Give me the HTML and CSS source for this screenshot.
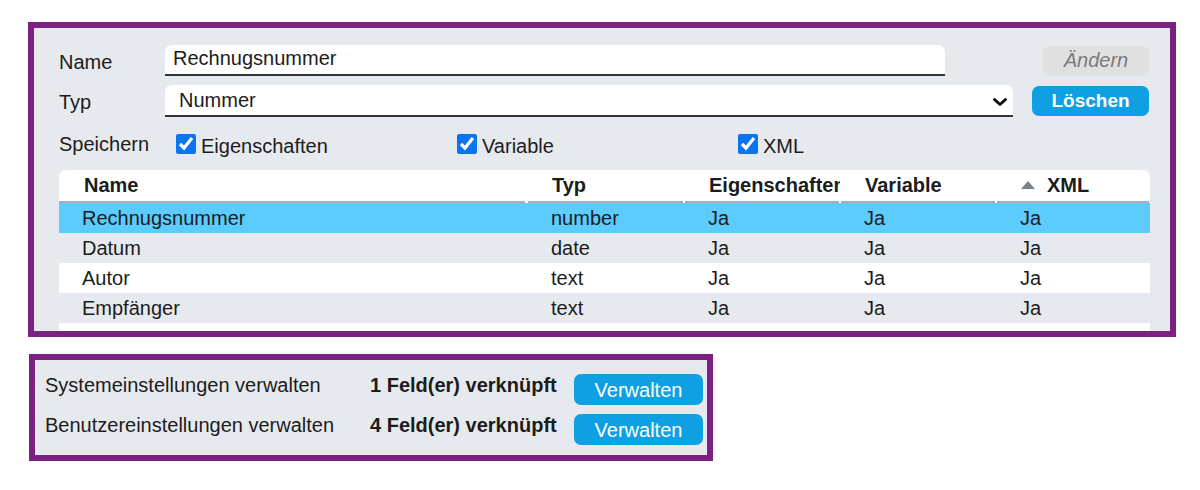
FILE: index.html
```html
<!DOCTYPE html>
<html lang="de">
<head>
<meta charset="utf-8">
<title>Felder</title>
<link rel="stylesheet" href="styles.css">
</head>
<body>
<section class="panel panel-main">
  <div class="form-row row-name">
    <label class="lbl" for="fname">Name</label>
    <input id="fname" class="txt" type="text" value="Rechnugsnummer">
    <button class="btn btn-disabled" type="button">Ändern</button>
  </div>
  <div class="form-row row-type">
    <label class="lbl" for="ftype">Typ</label>
    <div class="select-wrap">
      <select id="ftype" class="sel">
        <option>Nummer</option>
      </select>
      <svg class="chev" width="16" height="10" viewBox="0 0 16 10" aria-hidden="true"><path d="M2.5 2.5 L8 7.5 L13.5 2.5" fill="none" stroke="#111" stroke-width="3" stroke-linecap="round" stroke-linejoin="round"/></svg>
    </div>
    <button class="btn btn-primary btn-delete" type="button">Löschen</button>
  </div>
  <div class="form-row row-save">
    <span class="lbl">Speichern</span>
    <div class="checks">
      <label class="chk"><input type="checkbox" checked><span>Eigenschaften</span></label>
      <label class="chk"><input type="checkbox" checked><span>Variable</span></label>
      <label class="chk"><input type="checkbox" checked><span>XML</span></label>
    </div>
  </div>
  <div class="table">
    <div class="tr thead">
      <div class="th">Name</div>
      <div class="th">Typ</div>
      <div class="th">Eigenschaften</div>
      <div class="th">Variable</div>
      <div class="th th-sort"><span class="tri"></span>XML</div>
    </div>
    <div class="tr selected"><div class="td">Rechnugsnummer</div><div class="td">number</div><div class="td">Ja</div><div class="td">Ja</div><div class="td">Ja</div></div>
    <div class="tr alt"><div class="td">Datum</div><div class="td">date</div><div class="td">Ja</div><div class="td">Ja</div><div class="td">Ja</div></div>
    <div class="tr"><div class="td">Autor</div><div class="td">text</div><div class="td">Ja</div><div class="td">Ja</div><div class="td">Ja</div></div>
    <div class="tr alt"><div class="td">Empfänger</div><div class="td">text</div><div class="td">Ja</div><div class="td">Ja</div><div class="td">Ja</div></div>
    <div class="tr"><div class="td"></div><div class="td"></div><div class="td"></div><div class="td"></div><div class="td"></div></div>
  </div>
</section>

<section class="panel panel-settings">
  <div class="set-grid">
    <span class="set-label">Systemeinstellungen verwalten</span>
    <strong class="set-count">1 Feld(er) verknüpft</strong>
    <button class="btn btn-primary btn-manage" type="button">Verwalten</button>
    <span class="set-label">Benutzereinstellungen verwalten</span>
    <strong class="set-count">4 Feld(er) verknüpft</strong>
    <button class="btn btn-primary btn-manage" type="button">Verwalten</button>
  </div>
</section>
</body>
</html>
```

FILE: styles.css
```css
* { box-sizing: border-box; }

html, body {
  margin: 0;
  padding: 0;
  background: #ffffff;
}

body {
  font-family: "Liberation Sans", Arial, sans-serif;
  font-size: 20px;
  color: #1c1c1c;
}

.panel {
  border: 6px solid #7c2181;
  background: #e6eaee;
  overflow: hidden;
}

.panel-main {
  margin: 22px 0 0 28px;
  width: 1148px;
  height: 315px;
  padding: 17px 20px 0 25px;
}

.form-row {
  display: flex;
  align-items: center;
}

.lbl {
  width: 106px;
  flex: none;
}

.row-name { height: 31px; }
.row-name .lbl { padding-top: 4px; }

.txt {
  width: 780px;
  height: 31px;
  border: none;
  border-bottom: 2px solid #333;
  border-radius: 7px 7px 0 0;
  background: #fff;
  font: inherit;
  color: #1c1c1c;
  padding: 0 8px 2px;
  outline: none;
}

.btn {
  font-family: inherit;
  font-size: 20px;
  border: none;
  border-radius: 7px;
  padding: 0;
  cursor: pointer;
}

.btn-disabled {
  margin-left: auto;
  margin-right: 1px;
  width: 106px;
  height: 30px;
  background: #e0e0e0;
  color: #7a7a7a;
  font-style: italic;
}

.row-type {
  margin-top: 9px;
  height: 32px;
}

.row-type .lbl { padding-top: 2px; }

.select-wrap {
  position: relative;
  width: 848px;
  height: 32px;
}

.sel {
  appearance: none;
  -webkit-appearance: none;
  width: 100%;
  height: 32px;
  border: none;
  border-bottom: 2px solid #333;
  border-radius: 7px 7px 0 0;
  background: #fff;
  font: inherit;
  color: #1c1c1c;
  padding: 0 30px 0 14px;
  outline: none;
}

.chev {
  position: absolute;
  right: 5px;
  top: 12px;
  pointer-events: none;
}

.btn-primary {
  background: #0ea0e2;
  color: #ffffff;
}

.btn-delete {
  margin-left: auto;
  margin-right: 1px;
  width: 117px;
  height: 30px;
  font-weight: bold;
  font-size: 19px;
}

.row-save {
  margin-top: 16px;
  height: 22px;
}

.row-save .lbl { padding-top: 1px; }

.checks {
  display: flex;
}

.chk {
  width: 281px;
  display: flex;
  align-items: center;
}

.chk input {
  width: 20px;
  height: 20px;
  margin: 0 5px 0 11px;
  accent-color: #0b75f0;
}

.chk span { padding-top: 4px; }

.table {
  margin-top: 15px;
}

.tr {
  display: grid;
  grid-template-columns: 468px 157px 156px 156px 154px;
  height: 30px;
  align-items: center;
  background: #ffffff;
}

.tr.alt { background: transparent; }
.tr.selected { background: #5ccbfe; }

.thead {
  height: 33px;
  border-radius: 7px 7px 0 0;
  align-items: stretch;
}

.th {
  font-weight: bold;
  display: flex;
  align-items: center;
  padding: 0 3px 2px 25px;
  white-space: nowrap;
  overflow: hidden;
  background: linear-gradient(#acaeb1, #acaeb1) no-repeat left 1px bottom / calc(100% - 2px) 2px;
}

.th:first-child {
  background-position: left 0 bottom;
}

.th-sort {
  padding-left: 25px;
}

.tri {
  width: 0;
  height: 0;
  border-left: 7px solid transparent;
  border-right: 7px solid transparent;
  border-bottom: 8px solid #7c818a;
  margin-right: 12px;
  margin-top: -2px;
}

.td {
  padding-left: 24px;
  white-space: nowrap;
  overflow: hidden;
}

.td:first-child { padding-left: 23px; }

.panel-settings {
  margin: 17px 0 0 29px;
  width: 684px;
  height: 107px;
  padding: 14px 4px 10px 10px;
}

.set-grid {
  display: grid;
  grid-template-columns: 325px 204px 129px;
  grid-auto-rows: 31px;
  row-gap: 9px;
  align-items: start;
}

.set-count {
  font-weight: bold;
  white-space: nowrap;
}

.btn-manage {
  width: 129px;
  height: 31px;
  padding-top: 1px;
}
```
